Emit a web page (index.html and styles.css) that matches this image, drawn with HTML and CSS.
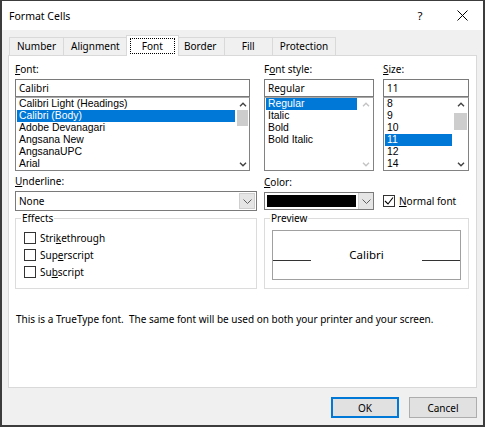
FILE: index.html
```html
<!DOCTYPE html>
<html lang="en">
<head>
<meta charset="UTF-8">
<title>Format Cells</title>
<link rel="stylesheet" href="styles.css">
</head>
<body>
<div class="dialog">
    <div class="titlebar">
        <span class="title">Format Cells</span>
        <span class="tbtn help">?</span>
        <span class="tbtn"><svg width="11" height="11" viewBox="0 0 11 11"><path d="M0.5 0.5L10.5 10.5M10.5 0.5L0.5 10.5" stroke="#000" stroke-width="1"/></svg></span>
    </div>
    <div class="main">
        <ul class="tabs">
            <li>Number</li>
            <li>Alignment</li>
            <li class="active"><span>Font</span></li>
            <li>Border</li>
            <li>Fill</li>
            <li>Protection</li>
        </ul>
        <div class="panel">
            <div class="row">
                <div class="field font-col">
                    <label><u>F</u>ont:</label>
                    <div class="edit">Calibri</div>
                    <div class="listbox">
                        <ul class="items">
                            <li>Calibri Light (Headings)</li>
                            <li class="sel">Calibri (Body)</li>
                            <li>Adobe Devanagari</li>
                            <li>Angsana New</li>
                            <li>AngsanaUPC</li>
                            <li>Arial</li>
                        </ul>
                        <div class="vscroll">
                            <span class="arrow"><svg width="8" height="5" viewBox="0 0 8 5"><path d="M1 4.2L4 1.2L7 4.2" fill="none" stroke="#404040" stroke-width="1.4"/></svg></span>
                            <span class="thumb"></span>
                            <span class="arrow down"><svg width="8" height="5" viewBox="0 0 8 5"><path d="M1 0.8L4 3.8L7 0.8" fill="none" stroke="#404040" stroke-width="1.4"/></svg></span>
                        </div>
                    </div>
                </div>
                <div class="field style-col">
                    <label>F<u>o</u>nt style:</label>
                    <div class="edit">Regular</div>
                    <div class="listbox">
                        <ul class="items">
                            <li class="sel">Regular</li>
                            <li>Italic</li>
                            <li>Bold</li>
                            <li>Bold Italic</li>
                        </ul>
                        <div class="vscroll off">
                            <span class="arrow"><svg width="8" height="5" viewBox="0 0 8 5"><path d="M1 4.2L4 1.2L7 4.2" fill="none" stroke="#c4c4c4" stroke-width="1.4"/></svg></span>
                            <span class="arrow down"><svg width="8" height="5" viewBox="0 0 8 5"><path d="M1 0.8L4 3.8L7 0.8" fill="none" stroke="#c4c4c4" stroke-width="1.4"/></svg></span>
                        </div>
                    </div>
                </div>
                <div class="field size-col">
                    <label><u>S</u>ize:</label>
                    <div class="edit">11</div>
                    <div class="listbox">
                        <ul class="items">
                            <li>8</li>
                            <li>9</li>
                            <li>10</li>
                            <li class="sel">11</li>
                            <li>12</li>
                            <li>14</li>
                        </ul>
                        <div class="vscroll">
                            <span class="arrow"><svg width="8" height="5" viewBox="0 0 8 5"><path d="M1 4.2L4 1.2L7 4.2" fill="none" stroke="#404040" stroke-width="1.4"/></svg></span>
                            <span class="thumb low"></span>
                            <span class="arrow down"><svg width="8" height="5" viewBox="0 0 8 5"><path d="M1 0.8L4 3.8L7 0.8" fill="none" stroke="#404040" stroke-width="1.4"/></svg></span>
                        </div>
                    </div>
                </div>
            </div>

            <div class="row row2">
                <div class="field under-col">
                    <label><u>U</u>nderline:</label>
                    <div class="combo">
                        <span class="value">None</span>
                        <span class="drop"><svg width="9" height="5" viewBox="0 0 9 5"><path d="M0.5 0.5L4.5 4.5L8.5 0.5" fill="none" stroke="#606060"/></svg></span>
                    </div>
                </div>
                <div class="field color-col">
                    <label><u>C</u>olor:</label>
                    <div class="combo color">
                        <span class="swatch"></span>
                        <span class="drop"><svg width="9" height="5" viewBox="0 0 9 5"><path d="M0.5 0.5L4.5 4.5L8.5 0.5" fill="none" stroke="#606060"/></svg></span>
                    </div>
                </div>
                <div class="check normal">
                    <span class="box"><svg width="10" height="10" viewBox="0 0 10 10"><path d="M1 5L4 8L9 1.5" fill="none" stroke="#000" stroke-width="1.1"/></svg></span>
                    <span><u>N</u>ormal font</span>
                </div>
            </div>

            <div class="row row3">
                <fieldset class="group effects">
                    <legend>Effects</legend>
                    <div class="opts">
                        <div class="check"><span class="box"></span><span>Stri<u>k</u>ethrough</span></div>
                        <div class="check"><span class="box"></span><span>Sup<u>e</u>rscript</span></div>
                        <div class="check"><span class="box"></span><span>Su<u>b</u>script</span></div>
                    </div>
                </fieldset>
                <fieldset class="group preview">
                    <legend>Preview</legend>
                    <div class="sample">
                        <span class="rule"></span>
                        <span class="sample-text">Calibri</span>
                        <span class="rule"></span>
                    </div>
                </fieldset>
            </div>

            <p class="note">This is a TrueType font.&nbsp; The same font will be used on both your printer and your screen.</p>
        </div>
        <div class="buttons">
            <span class="btn default">OK</span>
            <span class="btn">Cancel</span>
        </div>
    </div>
</div>
</body>
</html>
```

FILE: styles.css
```css
* {
    box-sizing: border-box;
}
body {
    margin: 0;
    background: #fff;
    color: #000;
    font: 10px/12px "Noto Sans", "Segoe UI", sans-serif;
}
ul {
    margin: 0;
    padding: 0;
    list-style: none;
}
.dialog {
    display: flex;
    flex-direction: column;
    width: 485px;
    height: 427px;
    border: 2px solid #3c3c3c;
    border-top-width: 1px;
    background: #f0f0f0;
}
.titlebar {
    display: flex;
    align-items: center;
    height: 29px;
    padding-left: 7px;
    background: #fff;
}
.title {
    flex: 1;
    font-size: 10.5px;
}
.tbtn {
    display: flex;
    align-items: center;
    justify-content: center;
    width: 42px;
    height: 29px;
}
.help {
    font-size: 11.5px;
}
.main {
    flex: 1;
    display: flex;
    flex-direction: column;
    padding: 5px 6px 7px;
}

/* tabs */
.tabs {
    display: flex;
    align-items: flex-end;
    height: 20px;
    padding-left: 1px;
}
.tabs li {
    height: 18px;
    min-width: 49px;
    padding: 0 7px;
    margin-left: -1px;
    line-height: 17px;
    text-align: center;
    border: 1px solid #d9d9d9;
    border-bottom: 0;
    background: #f0f0f0;
}
.tabs li:first-child {
    margin-left: 0;
}
.tabs li.active {
    position: relative;
    z-index: 1;
    height: 21px;
    min-width: 53px;
    margin: 0 -2px -1px -2px;
    padding: 2px 3px 0;
    background: #fff;
}
.tabs li.active span {
    display: block;
    height: 16px;
    line-height: 15px;
    border: 1px dotted #000;
}

.panel {
    flex: 1;
    padding: 6px 6px 0;
    background: #fff;
    border: 1px solid #d9d9d9;
    overflow: hidden;
}
.row {
    display: flex;
}
.field label {
    display: block;
    line-height: 15px;
    margin-bottom: 2px;
}
.font-col {
    width: 235px;
    margin-right: 14px;
}
.style-col {
    width: 110px;
    margin-right: 9px;
}
.size-col {
    width: 86px;
}
.edit {
    height: 18px;
    padding-left: 3px;
    line-height: 16px;
    border: 1px solid #7a7a7a;
}
.listbox {
    display: flex;
    height: 74px;
    border: 1px solid #828282;
    border-top-color: #a8a8a8;
    overflow: hidden;
}
.items {
    flex: 1;
    padding: 0 1px;
    overflow: hidden;
    font-family: "Liberation Sans", Arial, sans-serif;
    font-size: 10.4px;
}
.items li {
    height: 12px;
    padding-left: 2px;
    line-height: 12px;
    white-space: nowrap;
}
.items li.sel {
    background: #0078d7;
    color: #fff;
}
.vscroll {
    display: flex;
    flex-direction: column;
    width: 13px;
}
.style-col .vscroll,
.size-col .vscroll {
    width: 15px;
}
.vscroll .arrow {
    display: flex;
    align-items: center;
    justify-content: center;
    height: 12px;
}
.vscroll .down {
    margin-top: auto;
}
.thumb {
    height: 16px;
    margin: 0 1px;
    background: #cdcdcd;
}
.thumb.low {
    height: 17px;
    margin-top: 3px;
}

/* underline / color row */
.row2 {
    align-items: flex-end;
    margin-top: 3px;
}
.under-col {
    width: 242px;
    margin-right: 7px;
}
.color-col {
    width: 110px;
}
.combo {
    display: flex;
    height: 20px;
    border: 1px solid #7a7a7a;
    background: #fff;
}
.combo .value {
    flex: 1;
    padding-left: 3px;
    line-height: 18px;
}
.combo .drop {
    display: flex;
    align-items: center;
    justify-content: center;
    width: 16px;
    margin: 1px;
    background: #e5e5e5;
    border: 1px solid #cfcfcf;
}
.combo.color {
    height: 18px;
    margin-bottom: 1px;
}
.combo .swatch {
    flex: 1;
    margin: 2px;
    background: #000;
}
.combo.color .drop {
    width: 15px;
    margin: 0;
    border-width: 0 0 0 1px;
}
.check {
    display: flex;
    align-items: center;
    gap: 4px;
}
.check .box {
    display: flex;
    align-items: center;
    justify-content: center;
    width: 12px;
    height: 12px;
    border: 1px solid #333;
    background: #fff;
}
.check.normal {
    height: 20px;
    margin-left: 9px;
}

/* groups */
.row3 {
    gap: 7px;
}
.group {
    height: 78px;
    margin: 0;
    padding: 0;
    border: 1px solid #dcdcdc;
}
.group legend {
    margin-left: 5px;
    padding: 0 1px;
    line-height: 15px;
}
.effects {
    width: 242px;
}
.preview {
    width: 205px;
}
.opts {
    padding: 3px 0 0 8px;
}
.opts .check {
    height: 17px;
}
.sample {
    display: flex;
    align-items: center;
    height: 50px;
    margin: 4px 7px 0;
    border: 1px solid #a0a0a0;
}
.rule {
    width: 38px;
    height: 1px;
    margin-top: 10px;
    background: #333;
}
.sample-text {
    flex: 1;
    text-align: center;
    font-size: 11.5px;
}
.note {
    margin: 23px 0 0 1px;
    line-height: 15px;
}

/* buttons */
.buttons {
    display: flex;
    justify-content: flex-end;
    gap: 10px;
    margin-top: 9px;
}
.btn {
    display: flex;
    align-items: center;
    justify-content: center;
    width: 68px;
    height: 21px;
    border: 1px solid #adadad;
    background: #e1e1e1;
}
.btn.default {
    border-color: #0078d7;
    box-shadow: inset 0 0 0 1px #0078d7;
}
```
